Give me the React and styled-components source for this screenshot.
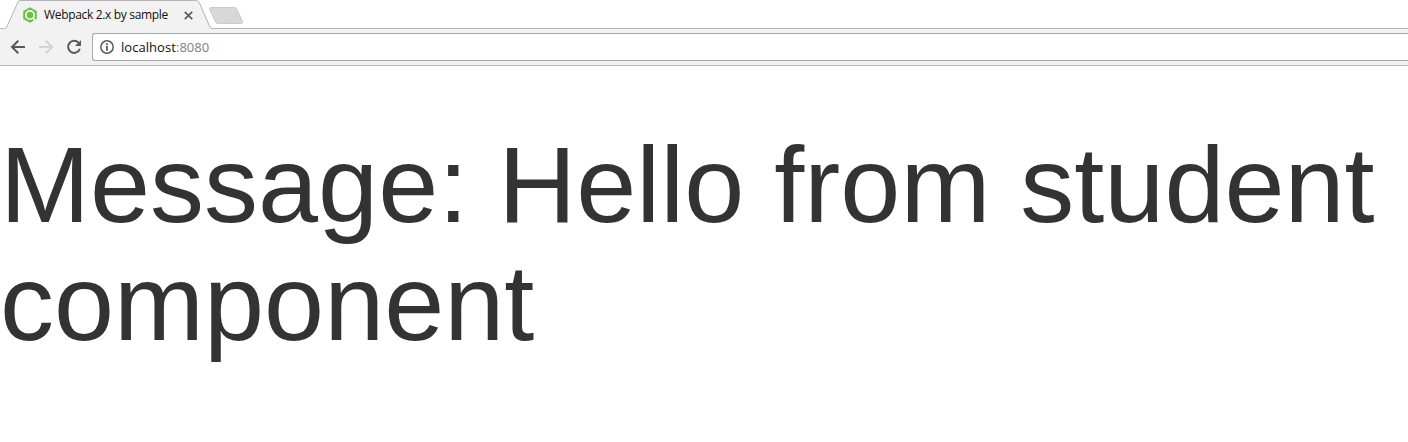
import React from "react";
import styled, { createGlobalStyle } from "styled-components";

const GlobalStyle = createGlobalStyle`
  body {
    margin: 0;
    background: #fff;
    overflow: hidden;
  }
`;

const Browser = styled.div`
  display: flex;
  flex-direction: column;
  height: 442px;
  background: #fff;
`;

const TabStrip = styled.div`
  position: relative;
  display: flex;
  height: 29px;
`;

const StripOutline = styled.svg`
  position: absolute;
  inset: 0;
  width: 100%;
  height: 29px;
`;

const Tab = styled.div`
  position: relative;
  display: flex;
  align-items: center;
  box-sizing: border-box;
  width: 208px;
  height: 29px;
  padding: 1px 0 0 22px;
`;

const Favicon = styled.svg`
  flex: none;
  width: 16px;
  height: 16px;
  margin-right: 6px;
`;

const TabTitle = styled.span`
  width: 140px;
  font: 12px/16px "Open Sans", sans-serif;
  letter-spacing: ${(p) => p.$tracking};
  white-space: nowrap;
  color: #111;
`;

const CloseIcon = styled.svg`
  flex: none;
  width: 9px;
  height: 9px;
`;

const NewTab = styled.svg`
  position: relative;
  width: 36px;
  height: 19px;
  margin-top: 6px;
`;

const Toolbar = styled.div`
  display: flex;
  box-sizing: border-box;
  height: 37px;
  padding: 4px 0 4px 10px;
  background: #f2f2f2;
  border-bottom: 1px solid #b6b4b6;
`;

const NavIcon = styled.svg`
  flex: none;
  width: 16px;
  height: 16px;
  margin: 6px 12px 0 0;
  fill: none;
  stroke: ${(p) => (p.$disabled ? "#d2d2d2" : "#5a5a5a")};
  stroke-width: 2;
`;

const AddressBar = styled.div`
  flex: 1;
  display: flex;
  align-items: center;
  box-sizing: border-box;
  height: 28px;
  margin-left: -2px;
  padding-left: 7px;
  background: #fff;
  border: 1px solid #a9a9a9;
  border-right: 0;
  border-radius: 3px 0 0 3px;
`;

const InfoIcon = styled.svg`
  width: 14px;
  height: 14px;
  margin-right: 7px;
`;

const Url = styled.span`
  font: 13px/18px "Open Sans", sans-serif;
  letter-spacing: ${(p) => p.$tracking};
  color: #111;
`;

const Port = styled.span`
  color: #808080;
`;

const Page = styled.main`
  flex: 1;
`;

const Message = styled.h1`
  margin: 60px 0 30px;
  font: 400 108px/118px "Liberation Sans", Arial, sans-serif;
  color: #333;
`;

export default function App() {
  return (
    <Browser>
      <GlobalStyle />
      <TabStrip>
        <StripOutline>
          <path d="M5 29 L6.5 27 L18 1.5 Q18.8 0 20 0 H197 Q198 0 198.7 1.5 L210 27 L212 29 Z" fill="#f2f2f2" />
          <path
            d="M0 28.5 H4.5 Q6 28.5 6.8 26.8 L18 2 Q18.8 0.500 20 0.500 H196.500 Q198 0.500 199 2 L209.800 26.800 Q210.600 28.500 212 28.500 H3000"
            fill="none"
            stroke="#b6b4b6"
          />
        </StripOutline>
        <Tab>
          <Favicon viewBox="0 0 16 16">
            <path d="M8 0.200 L14.800 4 V12 L8 15.800 L1.200 12 V4 Z" fill="#6cc04a" />
            <circle cx="8" cy="8" r="4.200" fill="none" stroke="#f4faf2" strokeWidth="1.700" />
            <path d="M11 11 L13.800 14" stroke="#f4faf2" strokeWidth="1.800" />
          </Favicon>
          <TabTitle $tracking="-0.33px">Webpack 2.x by sample</TabTitle>
          <CloseIcon viewBox="0 0 9 9">
            <path d="M0.800 0.800 L8.200 8.200 M8.200 0.800 L0.800 8.200" stroke="#5a5a5a" strokeWidth="1.700" />
          </CloseIcon>
        </Tab>
        <NewTab viewBox="0 0 36 19">
          <path
            d="M2.500 1.500 H26 Q28 1.500 28.800 3 L34.700 16 Q35 17.500 33.500 17.500 H10 Q8.300 17.500 7.500 16 L1.500 3 Q1 1.500 2.500 1.500 Z"
            fill="#d8d8d8"
            stroke="#cbcbcb"
          />
        </NewTab>
      </TabStrip>
      <Toolbar>
        <NavIcon viewBox="0 0 16 16">
          <path d="M15 8 H2.500 M8.300 1.700 L2 8 L8.300 14.300" />
        </NavIcon>
        <NavIcon $disabled viewBox="0 0 16 16">
          <path d="M1 8 H13.500 M7.700 1.700 L14 8 L7.700 14.300" />
        </NavIcon>
        <NavIcon viewBox="0 0 16 16">
          <path d="M12.600 3.900 A6 6 0 1 0 13.800 9.700" />
          <path d="M15 1 V7 H9 Z" fill="#5a5a5a" stroke="none" />
        </NavIcon>
        <AddressBar>
          <InfoIcon viewBox="0 0 14 14">
            <circle cx="7" cy="7" r="6.200" fill="none" stroke="#5a5a5a" strokeWidth="1.500" />
            <path d="M7 3.300 V4.900 M7 6 V10.700" stroke="#5a5a5a" strokeWidth="1.800" />
          </InfoIcon>
          <Url $tracking="0.05px">
            localhost<Port>:8080</Port>
          </Url>
        </AddressBar>
      </Toolbar>
      <Page>
        <Message>Message: Hello from student component</Message>
      </Page>
    </Browser>
  );
}
